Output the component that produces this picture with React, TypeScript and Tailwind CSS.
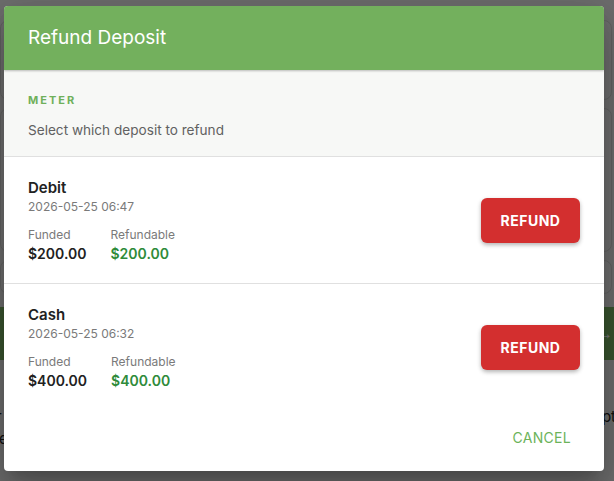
import React from "react";

type Deposit = {
  method: string;
  when: string;
  funded: string;
  refundable: string;
};

const deposits: Deposit[] = [
  { method: "Debit", when: "2026-05-25 06:47", funded: "$200.00", refundable: "$200.00" },
  { method: "Cash", when: "2026-05-25 06:32", funded: "$400.00", refundable: "$400.00" },
];

function BackgroundPage() {
  return (
    <div className="min-h-[481px] w-full overflow-hidden bg-[#dadada] pt-[20px]">
      <div className="flex flex-col gap-[8px] pl-0 pr-[2px]">
        <div className="h-[80px] rounded-[8px] border border-[#c4c4c4] bg-[#dcdcdc]" />
        <div className="h-[144px] rounded-[8px] border border-[#c4c4c4] bg-[#dcdcdc]" />
        <div className="h-[34px] rounded-[8px] border border-[#c4c4c4] bg-[#dcdcdc]" />
      </div>
      <div className="mt-[13px] flex h-[53px] items-center justify-end bg-[#72a85e] pr-[1px] text-[16px] text-[#e8e8e8]">
        <span className="font-['Roboto',sans-serif]">→</span>
      </div>
      <div className="mt-[46px] flex flex-col whitespace-nowrap font-['Inter',sans-serif] text-[15px] leading-[22px] text-[#222]">
        <div className="flex justify-between">
          <span className="-ml-[4px]">r</span>
          <span className="-mr-[2px]">receipt</span>
        </div>
        <p className="-ml-[1px]">e meter is closed once every deposit has been refunded in full today</p>
      </div>
    </div>
  );
}

function DepositRow({ d, last }: { d: Deposit; last: boolean }) {
  return (
    <div
      className={
        "flex items-center justify-between pl-[24px] pr-[24px] pt-[20px] pb-[19px] " +
        (last ? "" : "border-b border-[#e0e0e0]")
      }
    >
      <div className="flex flex-col">
        <div className="text-[15px] font-semibold leading-[21px] text-[#212121]">{d.method}</div>
        <div className="text-[12px] leading-[18px] text-[#7a7a7a]">{d.when}</div>
        <div className="mt-[9px] flex gap-[24px]">
          <div className="flex flex-col">
            <span className="text-[12px] leading-[19px] text-[#7a7a7a]">Funded</span>
            <span className="text-[14px] font-semibold leading-[20px] text-[#212121]">{d.funded}</span>
          </div>
          <div className="flex flex-col">
            <span className="text-[12px] leading-[19px] text-[#7a7a7a]">Refundable</span>
            <span className="text-[14px] font-semibold leading-[20px] text-[#2e8b3a]">{d.refundable}</span>
          </div>
        </div>
      </div>
      <button className="h-[45px] w-[99px] rounded-[6px] bg-[#d32f2f] text-[14px] font-bold tracking-[0.5px] text-white shadow-[0_2px_4px_rgba(0,0,0,0.3)]">
        REFUND
      </button>
    </div>
  );
}

export default function App() {
  return (
    <div className="relative h-[481px] w-[614px] overflow-hidden font-['Inter',sans-serif]">
      <BackgroundPage />
      <div className="absolute inset-0 bg-black/50">
        <div className="ml-[4px] mt-[6px] w-[600px] overflow-hidden rounded-[4px] bg-white shadow-[0_11px_15px_-7px_rgba(0,0,0,0.2),0_24px_38px_3px_rgba(0,0,0,0.14),0_9px_46px_8px_rgba(0,0,0,0.12)]">
          <div className="relative z-10 flex h-[64px] items-center bg-[#73b05d] px-[24px] shadow-[0_1px_2px_rgba(0,0,0,0.25)]">
            <h2 className="text-[19px] font-normal text-white">Refund Deposit</h2>
          </div>
          <div className="border-b border-[#e0e0e0] bg-[#f7f8f6] px-[24px] pt-[22px] pb-[16px]">
            <div className="text-[11px] font-bold leading-[16px] tracking-[2px] text-[#6fb05a]">METER</div>
            <div className="mt-[12px] text-[13.6px] leading-[20px] text-[#616161]">Select which deposit to refund</div>
          </div>
          {deposits.map((d, i) => (
            <DepositRow key={d.method} d={d} last={i === deposits.length - 1} />
          ))}
          <div className="flex justify-end pr-[25px] pt-[9px] pb-[16px]">
            <button className="h-[36px] rounded-[4px] px-[8px] text-[14px] font-normal tracking-[0.3px] text-[#6cb35a]">
              CANCEL
            </button>
          </div>
        </div>
      </div>
    </div>
  );
}
